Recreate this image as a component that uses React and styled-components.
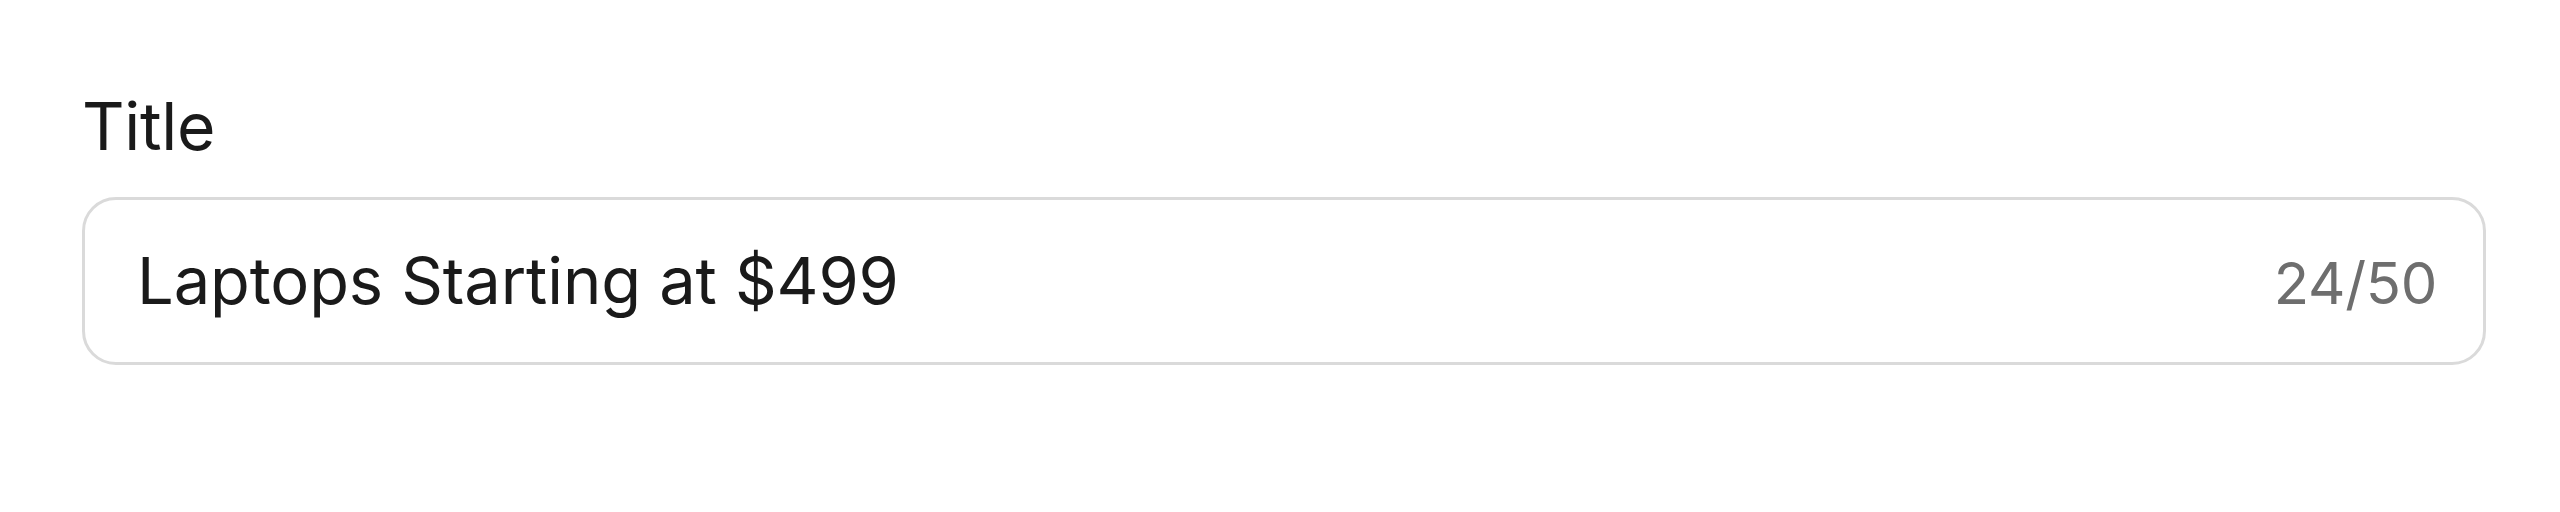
import React from "react";
import styled, { createGlobalStyle } from "styled-components";

const Global = createGlobalStyle`
  html, body { margin: 0; padding: 0; background: #ffffff; }
  body { font-family: Inter, "Noto Sans", sans-serif; color: #1a1a1a; }
`;

const Page = styled.div`
  padding: 86px 74px 0 82px;
  display: flex;
  flex-direction: column;
  gap: 31px;
`;

const Label = styled.label`
  font-size: 66px;
  line-height: 80px;
  font-weight: 400;
  color: #1a1a1a;
  letter-spacing: -0.3px;
`;

const Field = styled.div`
  box-sizing: border-box;
  height: 168px;
  border: 3px solid #dadada;
  border-radius: 34px;
  display: flex;
  align-items: baseline;
  padding: 0 46px 0 52px;
  line-height: 162px;
`;

const Value = styled.span`
  flex: 1;
  font-size: 65px;
  color: #1a1a1a;
  letter-spacing: -0.1px;
`;

const Counter = styled.span`
  font-size: 58px;
  color: #6e6e6e;
  letter-spacing: -0.3px;
`;

export default function App() {
  return (
    <>
      <Global />
      <Page>
        <Label>Title</Label>
        <Field>
          <Value>Laptops Starting at $499</Value>
          <Counter>24/50</Counter>
        </Field>
      </Page>
    </>
  );
}
